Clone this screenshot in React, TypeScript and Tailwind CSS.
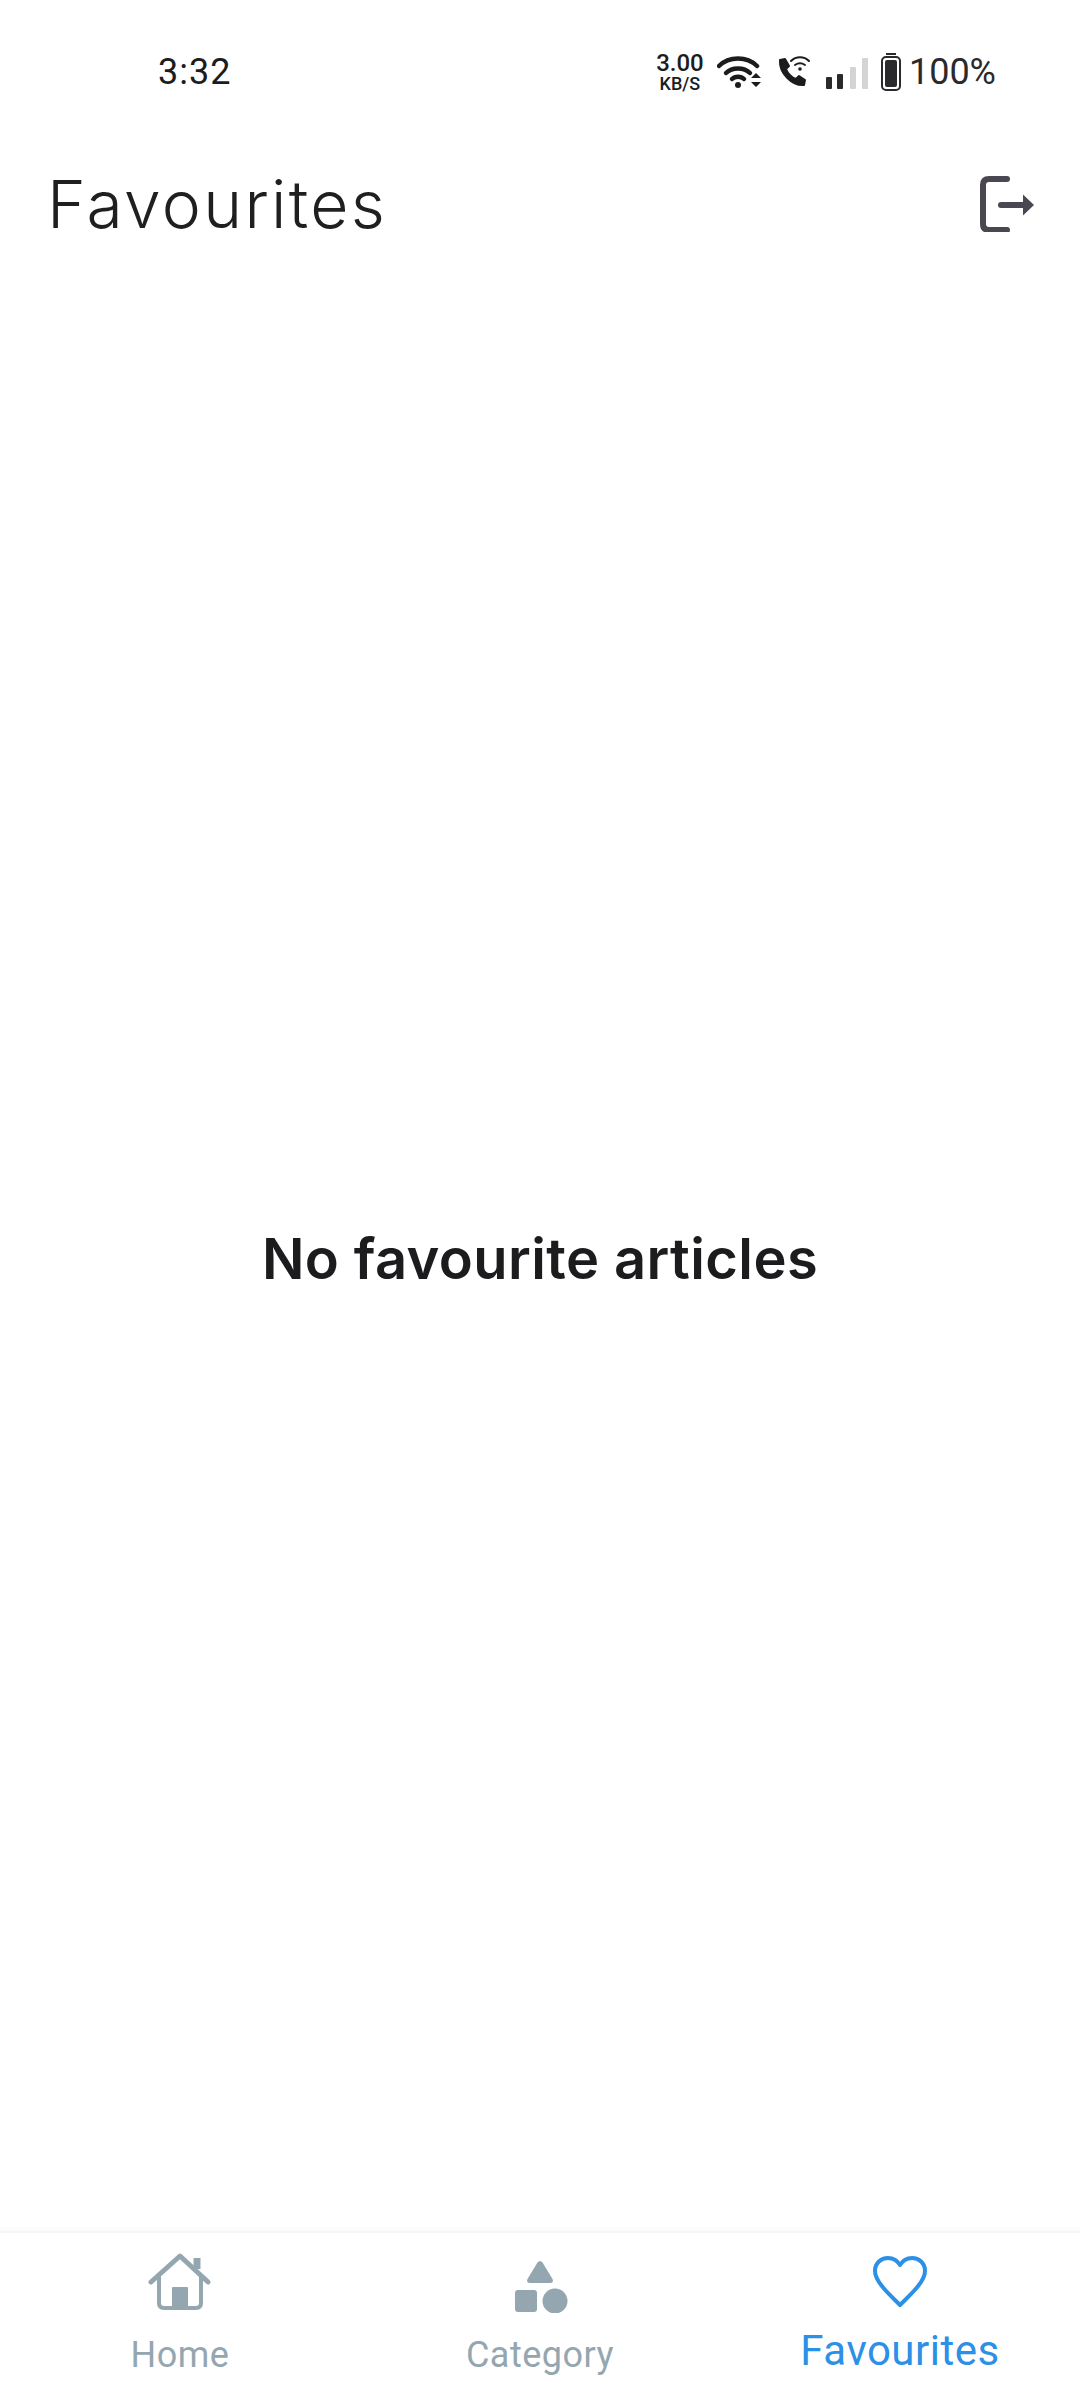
const HomeIcon = () => (
  <svg width="64" height="64" viewBox="0 0 64 64" fill="none" stroke="#94a6af" strokeWidth="5" strokeLinecap="round" strokeLinejoin="round">
    <path d="M3 33 L32 7 L60 33" />
    <path d="M49 9 V20" strokeWidth="7" strokeLinecap="butt" />
    <path d="M11 27 V54 Q11 59 16 59 H48 Q53 59 53 54 V27" strokeWidth="4" />
    <rect x="24" y="38" width="16" height="23" rx="1" fill="#94a6af" stroke="none" />
  </svg>
);

const CategoryIcon = () => (
  <svg width="64" height="64" viewBox="0 0 64 64" fill="#94a6af">
    <path d="M29.5 13.5 Q32 10.5 34.5 13.5 L44.5 30 Q46 34 42 34 H22 Q18 34 19.5 30 Z" />
    <rect x="7" y="41" width="22" height="22" rx="3" />
    <circle cx="47" cy="52" r="12.5" />
  </svg>
);

const HeartIcon = () => (
  <svg width="64" height="64" viewBox="0 0 64 64" fill="none" stroke="#2b90e6" strokeWidth="4" strokeLinejoin="round">
    <path d="M32 56 C22 46 7 33 7 22 C7 14 13 9 20 9 C25 9 29 11 32 16 C35 11 39 9 44 9 C51 9 57 14 57 22 C57 33 42 46 32 56 Z" />
  </svg>
);

const LogoutIcon = () => (
  <svg width="56" height="56" viewBox="0 0 56 56" fill="none" stroke="#4a4750" strokeWidth="6" strokeLinecap="round" strokeLinejoin="round">
    <path d="M28 3 H10 Q4 3 4 9 V48 Q4 54 10 54 H28" />
    <path d="M22 29 H46" />
    <path d="M44 18.5 L55 29 L44 39.5 Z" fill="#4a4750" stroke="none" />
  </svg>
);

const WifiIcon = () => (
  <svg width="46" height="34" viewBox="0 0 46 34" fill="none" stroke="#1c1c1e" strokeWidth="4.5" strokeLinecap="round">
    <path d="M2 11 C12 1 30 1 40 11" />
    <path d="M9 18 C15 12 27 12 33 18" />
    <path d="M15 24 C18 21 24 21 27 24" />
    <circle cx="21" cy="30" r="3" fill="#1c1c1e" stroke="none" />
    <path d="M34 23 L39 18 L44 23 Z M34 27 L39 32 L44 27 Z" fill="#1c1c1e" stroke="none" />
  </svg>
);

const CallIcon = () => (
  <svg width="34" height="32" viewBox="0 0 34 32" fill="none">
    <path d="M3 4 L8 3 L12 10 L9 13 C11 18 14 21 19 23 L22 20 L28 24 L27 29 C15 30 2 17 3 4 Z" fill="#1c1c1e" stroke="#1c1c1e" strokeWidth="2" strokeLinejoin="round" />
    <g stroke="#1c1c1e" strokeWidth="2" strokeLinecap="round">
      <path d="M14 5 C19 0 27 0 32 5" />
      <path d="M18 9 C21 7 25 7 28 9" />
    </g>
    <circle cx="23" cy="13" r="1.8" fill="#1c1c1e" />
  </svg>
);

const SignalIcon = () => (
  <svg width="42" height="32" viewBox="0 0 42 32">
    <rect x="0" y="20" width="6" height="12" rx="1" fill="#2a2a2c" />
    <rect x="11" y="17" width="6" height="15" rx="1" fill="#2a2a2c" />
    <rect x="24" y="10" width="6" height="22" rx="1" fill="#d4d4d4" />
    <rect x="36" y="1" width="6" height="31" rx="1" fill="#d4d4d4" />
  </svg>
);

const BatteryIcon = () => (
  <svg width="20" height="38" viewBox="0 0 20 38">
    <rect x="5" y="0" width="10" height="2" fill="#2a2a2c" />
    <rect x="1" y="4" width="18" height="33" rx="4" fill="none" stroke="#2a2a2c" strokeWidth="2" />
    <rect x="4" y="7" width="12" height="27" rx="2" fill="#2a2a2c" />
  </svg>
);

const StatusBar = () => (
  <div className="flex h-[144px] items-center justify-between pl-[158px] pr-[84px] font-['Roboto',sans-serif] text-[#1c1c1e]">
    <span className="text-[36px] leading-none tracking-[1px]">3:32</span>
    <div className="flex items-center">
      <div className="flex w-[50px] flex-col items-center font-medium">
        <span className="text-[24px] leading-[24px]">3.00</span>
        <span className="text-[18px] leading-[18px]">KB/S</span>
      </div>
      <div className="ml-[12px]"><WifiIcon /></div>
      <div className="ml-[14px]"><CallIcon /></div>
      <div className="ml-[15px] mt-[2px]"><SignalIcon /></div>
      <div className="ml-[13px]"><BatteryIcon /></div>
      <span className="ml-[8px] text-[36px] leading-none text-[#2a2a2c]">100%</span>
    </div>
  </div>
);

const NavItem = ({ icon, label, active }: { icon: React.ReactNode; label: string; active?: boolean }) => (
  <div className="flex flex-1 flex-col items-center pt-[16px]">
    {icon}
    <span
      className={
        active
          ? "mt-[14px] text-[42px] leading-[48px] tracking-[0.5px] text-[#2b90e6]"
          : "mt-[22px] text-[36px] leading-[40px] tracking-[0.5px] text-[#94a6af]"
      }
    >
      {label}
    </span>
  </div>
);

export default function App() {
  return (
    <div className="flex h-[2400px] w-[1080px] flex-col bg-white font-['Inter',sans-serif]">
      <StatusBar />
      <header className="flex h-[120px] items-center justify-between pl-[47px] pr-[45px]">
        <h1 className="text-[66px] font-[350] leading-none tracking-[2.3px] text-[#1f1f21]">Favourites</h1>
        <LogoutIcon />
      </header>
      <main className="flex flex-1 items-center justify-center pt-[22px]">
        <p className="text-[56px] font-semibold leading-none tracking-[0.4px] text-[#1c1c1e]">No favourite articles</p>
      </main>
      <nav className="flex h-[169px] border-t-2 border-[#f5f5f5] shadow-[0_-3px_4px_#00000005] font-['Roboto',sans-serif]">
        <NavItem icon={<HomeIcon />} label="Home" />
        <NavItem icon={<CategoryIcon />} label="Category" />
        <NavItem icon={<HeartIcon />} label="Favourites" active />
      </nav>
    </div>
  );
}
